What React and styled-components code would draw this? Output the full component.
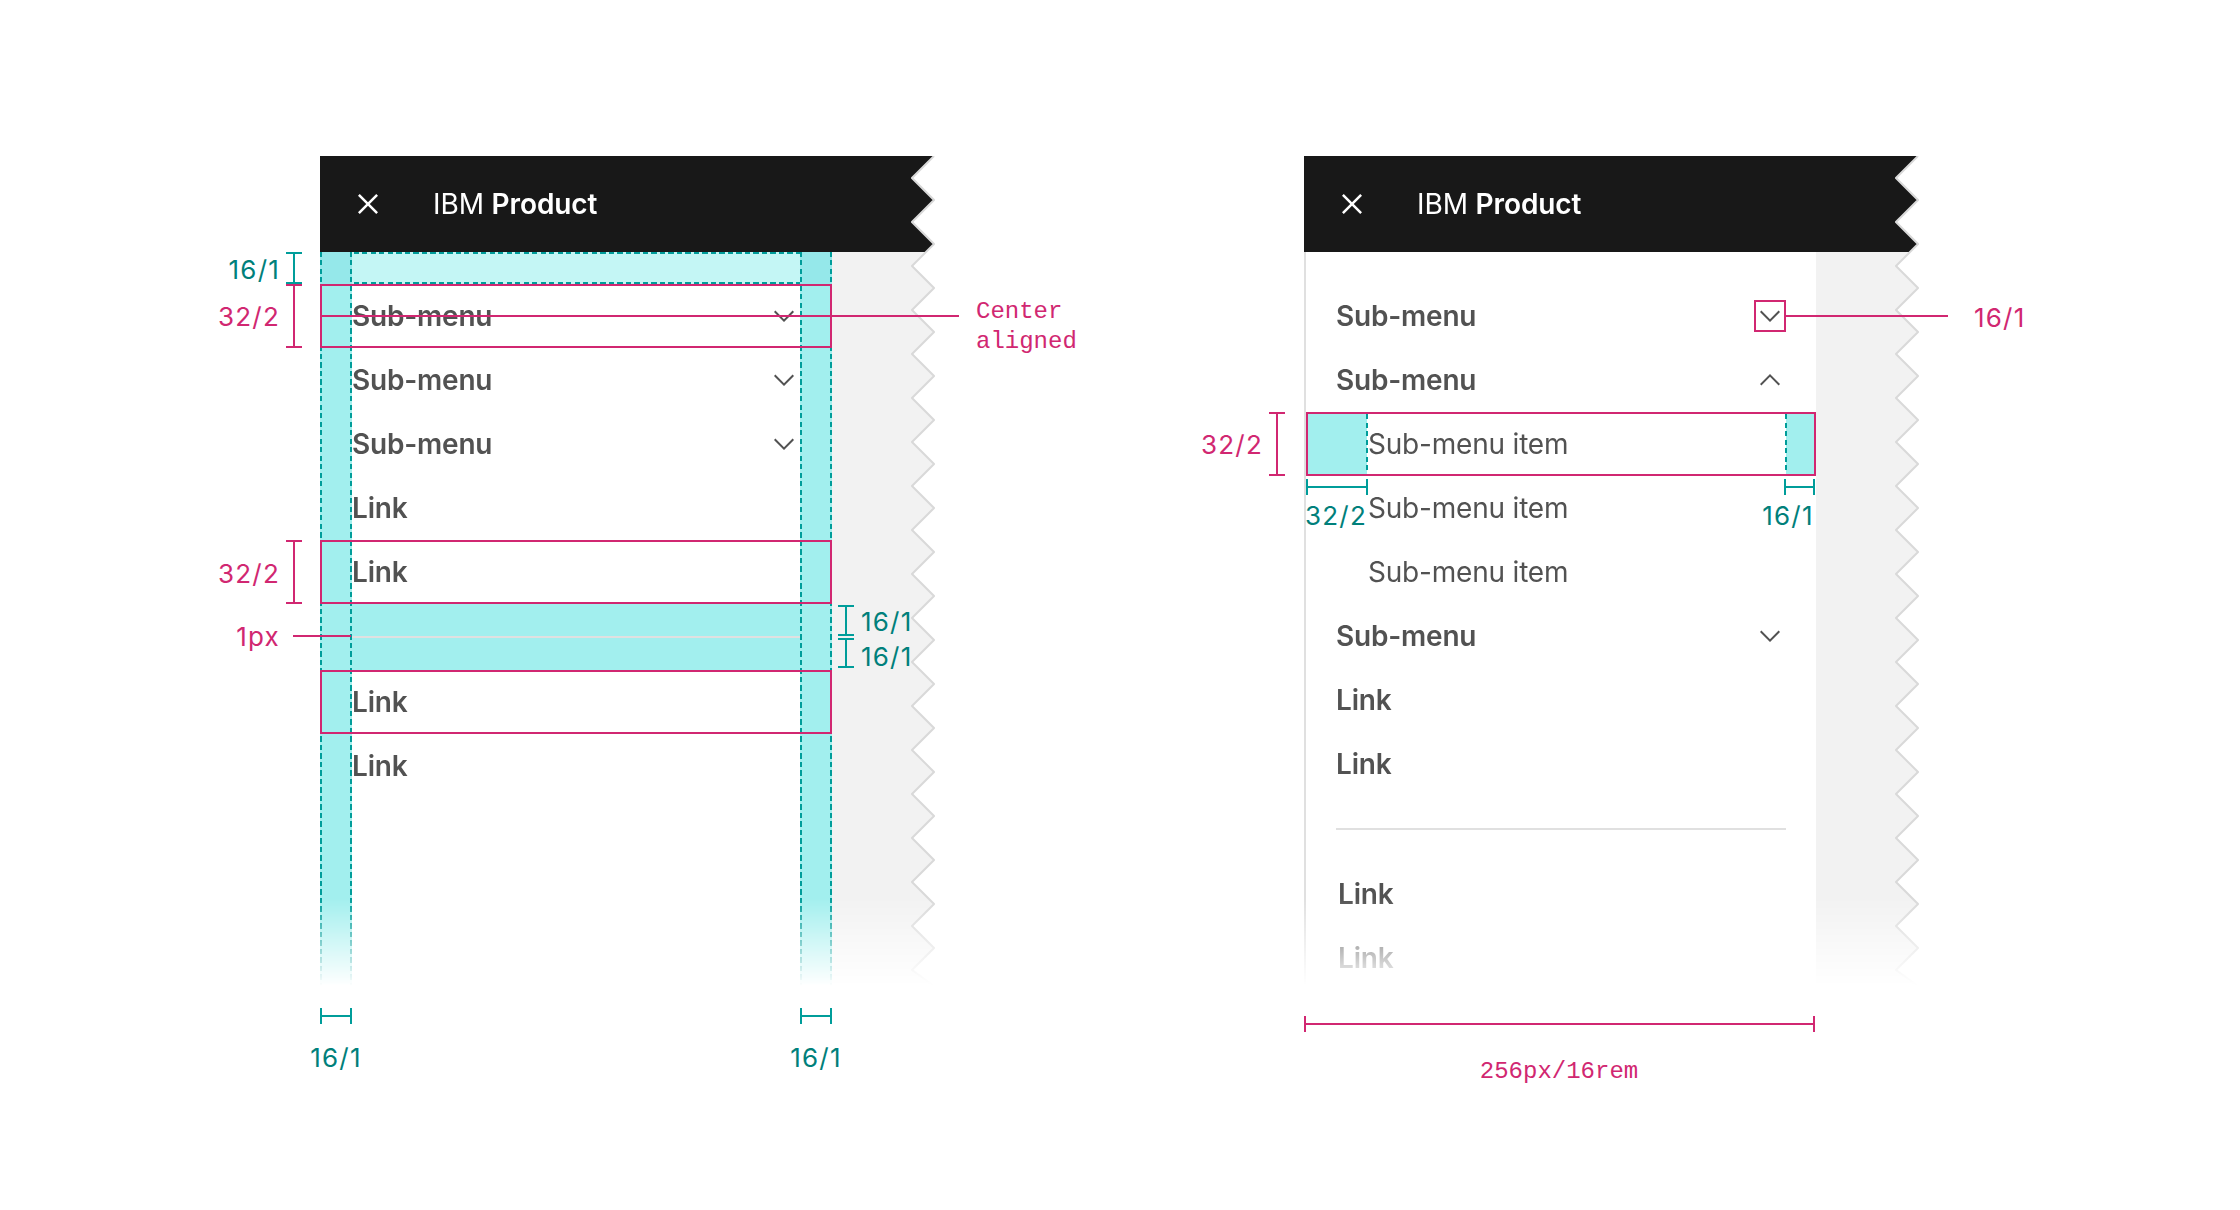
import React from 'react';
import styled, { createGlobalStyle } from 'styled-components';

const PINK = '#d12771';
const TEAL = '#009d9a';
const TEAL_TEXT = '#00807b';
const CYAN = '#a2efee';
const CYAN_LIGHT = '#c4f6f5';
const TEXT = '#525252';
const SANS = 'Inter, "Noto Sans", "Liberation Sans", sans-serif';
const MONO = '"Liberation Mono", "DejaVu Sans Mono", monospace';

const GlobalStyle = createGlobalStyle`
  html, body { margin: 0; padding: 0; background: #ffffff; }
  body { width: 2240px; height: 1210px; overflow: hidden; font-family: ${SANS}; }
`;

const Page = styled.main`
  display: flex;
  align-items: flex-start;
  gap: 369px;
  box-sizing: border-box;
  width: 2240px;
  height: 1210px;
  padding: 156px 0 0 320px;
`;

const Diagram = styled.section`
  position: relative;
  width: 615px;
  height: 830px;
  flex: none;
`;

const Frame = styled.div`
  display: flex;
  height: 830px;
  -webkit-mask-image: linear-gradient(to bottom, #000 calc(100% - 88px), transparent 100%);
  mask-image: linear-gradient(to bottom, #000 calc(100% - 88px), transparent 100%);
`;

const Main = styled.div`
  width: 591px;
  display: flex;
  flex-direction: column;
`;

const Header = styled.header`
  height: 96px;
  flex: none;
  background: #181818;
  display: flex;
  align-items: center;
  color: #ffffff;
`;

const CloseButton = styled.span`
  width: 96px;
  height: 96px;
  display: flex;
  align-items: center;
  justify-content: center;
`;

const Title = styled.span`
  padding-left: 17px;
  font-size: 28px;
  font-weight: 400;
  letter-spacing: -0.1px;
  b { font-weight: 600; }
`;

const Body = styled.div`
  flex: 1;
  display: flex;
`;

const Nav = styled.nav`
  position: relative;
  width: 512px;
  box-sizing: border-box;
  padding-top: 32px;
  background: #ffffff;
  border-left: ${(p) => (p.$bordered ? '2px solid #e0e0e0' : 'none')};
  display: flex;
  flex-direction: column;
`;

const Strip = styled.div`
  flex: 1;
  background: #f2f2f2;
`;

const vDash = `repeating-linear-gradient(to bottom, ${TEAL} 0 5px, transparent 5px 8.5px)`;
const hDash = `repeating-linear-gradient(to right, ${TEAL} 0 5px, transparent 5px 8.5px)`;

const GuideBand = styled.div`
  position: absolute;
  top: 0;
  left: 0;
  right: 0;
  height: 32px;
  background: ${CYAN_LIGHT};
  z-index: 0;
  &::before, &::after {
    content: '';
    position: absolute;
    left: 0;
    right: 0;
    height: 2px;
    background: ${hDash};
  }
  &::before { top: 0; }
  &::after { bottom: 0; }
`;

const GuideColumn = styled.div`
  position: absolute;
  top: 0;
  bottom: 0;
  width: 32px;
  ${(p) => (p.$side === 'left' ? 'left: 0;' : 'right: 0;')}
  background: linear-gradient(#95e8ea, #95e8ea) top / 100% 32px no-repeat, ${CYAN};
  z-index: 0;
  &::before, &::after {
    content: '';
    position: absolute;
    top: 0;
    bottom: 0;
    width: 2px;
    background: ${vDash};
  }
  &::before { left: 0; }
  &::after { right: 0; }
`;

const Row = styled.div`
  position: relative;
  z-index: 1;
  height: 64px;
  flex: none;
  box-sizing: border-box;
  display: flex;
  align-items: center;
  justify-content: space-between;
  padding: 0 ${(p) => p.$padRight}px 0 ${(p) => p.$padLeft}px;
  font-size: 28px;
  font-weight: ${(p) => (p.$strong ? 600 : 400)};
  letter-spacing: -0.2px;
  color: ${TEXT};
  white-space: nowrap;
  ${(p) =>
    p.$guided
      ? `background: linear-gradient(to right, ${CYAN} 0 61px, transparent 61px calc(100% - 30px), ${CYAN} calc(100% - 30px));`
      : ''}
  box-shadow: ${(p) => (p.$outlined ? `inset 0 0 0 2px ${PINK}` : 'none')};
  &::before, &::after {
    content: '';
    display: ${(p) => (p.$guided ? 'block' : 'none')};
    position: absolute;
    top: 2px;
    bottom: 2px;
    width: 2px;
    background: ${vDash};
  }
  &::before { left: 60px; }
  &::after { right: 29px; }
`;

const IconBox = styled.span`
  width: 32px;
  height: 32px;
  display: flex;
  align-items: center;
  justify-content: center;
  box-sizing: border-box;
  box-shadow: ${(p) => (p.$outlined ? `inset 0 0 0 2px ${PINK}` : 'none')};
`;

const Divider = styled.div`
  flex: none;
  padding: 32px ${(p) => p.$inset}px;
  background: ${(p) => (p.$annotated ? CYAN : 'transparent')};
  &::before {
    content: '';
    display: block;
    height: 2px;
    background: #e0e0e0;
  }
`;

/* annotation layer */
const VBracket = styled.div`
  position: absolute;
  left: ${(p) => p.$x}px;
  top: ${(p) => p.$y}px;
  width: 16px;
  height: ${(p) => p.$h}px;
  box-sizing: border-box;
  border-top: 2px solid ${(p) => p.$color};
  border-bottom: 2px solid ${(p) => p.$color};
  background: linear-gradient(${(p) => p.$color}, ${(p) => p.$color}) center / 2px 100% no-repeat;
`;

const HBracket = styled.div`
  position: absolute;
  left: ${(p) => p.$x}px;
  top: ${(p) => p.$y}px;
  width: ${(p) => p.$w}px;
  height: 16px;
  box-sizing: border-box;
  border-left: 2px solid ${(p) => p.$color};
  border-right: 2px solid ${(p) => p.$color};
  background: linear-gradient(${(p) => p.$color}, ${(p) => p.$color}) center / 100% 2px no-repeat;
`;

const Leader = styled.div`
  position: absolute;
  z-index: 3;
  left: ${(p) => p.$x}px;
  top: ${(p) => p.$y}px;
  width: ${(p) => p.$w}px;
  height: 2px;
  background: ${PINK};
`;

const shift = { left: '0', right: '-100%', center: '-50%' };

const Label = styled.span`
  position: absolute;
  left: ${(p) => p.$x}px;
  top: ${(p) => p.$y}px;
  transform: translate(${(p) => shift[p.$align || 'left']}, -50%);
  font-family: ${(p) => (p.$mono ? MONO : SANS)};
  font-size: ${(p) => (p.$mono ? 24 : 26)}px;
  letter-spacing: ${(p) => (p.$mono ? 0 : 1.2)}px;
  font-weight: 400;
  line-height: 30px;
  color: ${(p) => (p.$tone === 'teal' ? TEAL_TEXT : PINK)};
  white-space: pre;
  text-align: left;
`;

function CloseIcon() {
  return (
    <svg width="40" height="40" viewBox="0 0 32 32" fill="#ffffff">
      <path d="M17.4141 16L24 9.4141 22.5859 8 16 14.5859 9.4143 8 8 9.4141 14.5859 16 8 22.5859 9.4143 24 16 17.4141 22.5859 24 24 22.5859 17.4141 16z" />
    </svg>
  );
}

function Chevron({ up }) {
  return (
    <svg width="32" height="32" viewBox="0 0 16 16" fill={TEXT}>
      {up ? (
        <path d="M8 5L13 10 12.3 10.7 8 6.4 3.7 10.7 3 10z" />
      ) : (
        <path d="M8 11L3 6 3.7 5.3 8 9.6 12.3 5.3 13 6z" />
      )}
    </svg>
  );
}

function TornEdge() {
  const H = 830;
  const OUT = 23;
  const IN = 1;
  const pts = [];
  for (let y = 0, i = 0; y <= H + 22; y += 22, i++) pts.push([i % 2 === 0 ? OUT : IN, Math.min(y, H)]);
  const zig = pts.map(([x, y]) => `${x},${y}`).join(' ');
  const poly = `0,0 ${zig} 0,${H}`;
  return (
    <svg width="24" height={H} viewBox={`0 0 24 ${H}`} style={{ flex: 'none', display: 'block' }}>
      <defs>
        <linearGradient id="tornFill" gradientUnits="userSpaceOnUse" x1="0" y1="0" x2="0" y2={H}>
          <stop offset={96 / H} stopColor="#181818" />
          <stop offset={96 / H} stopColor="#f2f2f2" />
        </linearGradient>
      </defs>
      <polygon points={poly} fill="url(#tornFill)" />
      <polyline points={zig} fill="none" stroke="#d9d9d9" strokeWidth="2" />
    </svg>
  );
}

function Screen({ bordered, children }) {
  return (
    <Frame>
      <Main>
        <Header>
          <CloseButton>
            <CloseIcon />
          </CloseButton>
          <Title>
            IBM <b>Product</b>
          </Title>
        </Header>
        <Body>
          <Nav $bordered={bordered}>{children}</Nav>
          <Strip />
        </Body>
      </Main>
      <TornEdge />
    </Frame>
  );
}

function LeftDiagram() {
  const pad = { $padLeft: 32, $padRight: 32 };
  return (
    <Diagram>
      <Screen>
        <GuideBand />
        <GuideColumn $side="left" />
        <GuideColumn $side="right" />
        <Row {...pad} $strong $outlined>
          Sub-menu
          <IconBox><Chevron /></IconBox>
        </Row>
        <Row {...pad} $strong>
          Sub-menu
          <IconBox><Chevron /></IconBox>
        </Row>
        <Row {...pad} $strong>
          Sub-menu
          <IconBox><Chevron /></IconBox>
        </Row>
        <Row {...pad} $strong>Link</Row>
        <Row {...pad} $strong $outlined>Link</Row>
        <Divider $inset={32} $annotated />
        <Row {...pad} $strong $outlined>Link</Row>
        <Row {...pad} $strong>Link</Row>
      </Screen>

      <VBracket $x={-34} $y={96} $h={32} $color={TEAL} />
      <Label $x={-40} $y={114} $align="right" $tone="teal">16/1</Label>
      <VBracket $x={-34} $y={128} $h={64} $color={PINK} />
      <Label $x={-40} $y={161} $align="right">32/2</Label>
      <Leader $x={0} $y={159} $w={639} />
      <Label $x={656} $y={171} $mono>{'Center\naligned'}</Label>

      <VBracket $x={-34} $y={384} $h={64} $color={PINK} />
      <Label $x={-40} $y={418} $align="right">32/2</Label>
      <Leader $x={-27} $y={479} $w={58} />
      <Label $x={-40} $y={481} $align="right">1px</Label>

      <VBracket $x={518} $y={449} $h={31} $color={TEAL} />
      <VBracket $x={518} $y={482} $h={30} $color={TEAL} />
      <Label $x={541} $y={466} $tone="teal">16/1</Label>
      <Label $x={541} $y={501} $tone="teal">16/1</Label>

      <HBracket $x={0} $y={852} $w={32} $color={TEAL} />
      <HBracket $x={480} $y={852} $w={32} $color={TEAL} />
      <Label $x={16} $y={902} $align="center" $tone="teal">16/1</Label>
      <Label $x={496} $y={902} $align="center" $tone="teal">16/1</Label>
    </Diagram>
  );
}

function RightDiagram() {
  const pad = { $padLeft: 30, $padRight: 30 };
  const itemPad = { $padLeft: 62, $padRight: 30 };
  return (
    <Diagram>
      <Screen bordered>
        <Row {...pad} $strong>
          Sub-menu
          <IconBox $outlined><Chevron /></IconBox>
        </Row>
        <Row {...pad} $strong>
          Sub-menu
          <IconBox><Chevron up /></IconBox>
        </Row>
        <Row {...itemPad} $outlined $guided>Sub-menu item</Row>
        <Row {...itemPad}>Sub-menu item</Row>
        <Row {...itemPad}>Sub-menu item</Row>
        <Row {...pad} $strong>
          Sub-menu
          <IconBox><Chevron /></IconBox>
        </Row>
        <Row {...pad} $strong>Link</Row>
        <Row {...pad} $strong>Link</Row>
        <Divider $inset={30} />
        <Row $padLeft={32} $padRight={30} $strong>Link</Row>
        <Row $padLeft={32} $padRight={30} $strong>Link</Row>
      </Screen>

      <Leader $x={480} $y={159} $w={164} />
      <Label $x={670} $y={162}>16/1</Label>

      <VBracket $x={-35} $y={256} $h={64} $color={PINK} />
      <Label $x={-41} $y={289} $align="right">32/2</Label>

      <HBracket $x={2} $y={323} $w={62} $color={TEAL} />
      <HBracket $x={480} $y={323} $w={31} $color={TEAL} />
      <Label $x={32} $y={360} $align="center" $tone="teal">32/2</Label>
      <Label $x={484} $y={360} $align="center" $tone="teal">16/1</Label>

      <HBracket $x={0} $y={860} $w={511} $color={PINK} />
      <Label $x={255} $y={916} $align="center" $mono>256px/16rem</Label>
    </Diagram>
  );
}

export default function App() {
  return (
    <>
      <GlobalStyle />
      <Page>
        <LeftDiagram />
        <RightDiagram />
      </Page>
    </>
  );
}
